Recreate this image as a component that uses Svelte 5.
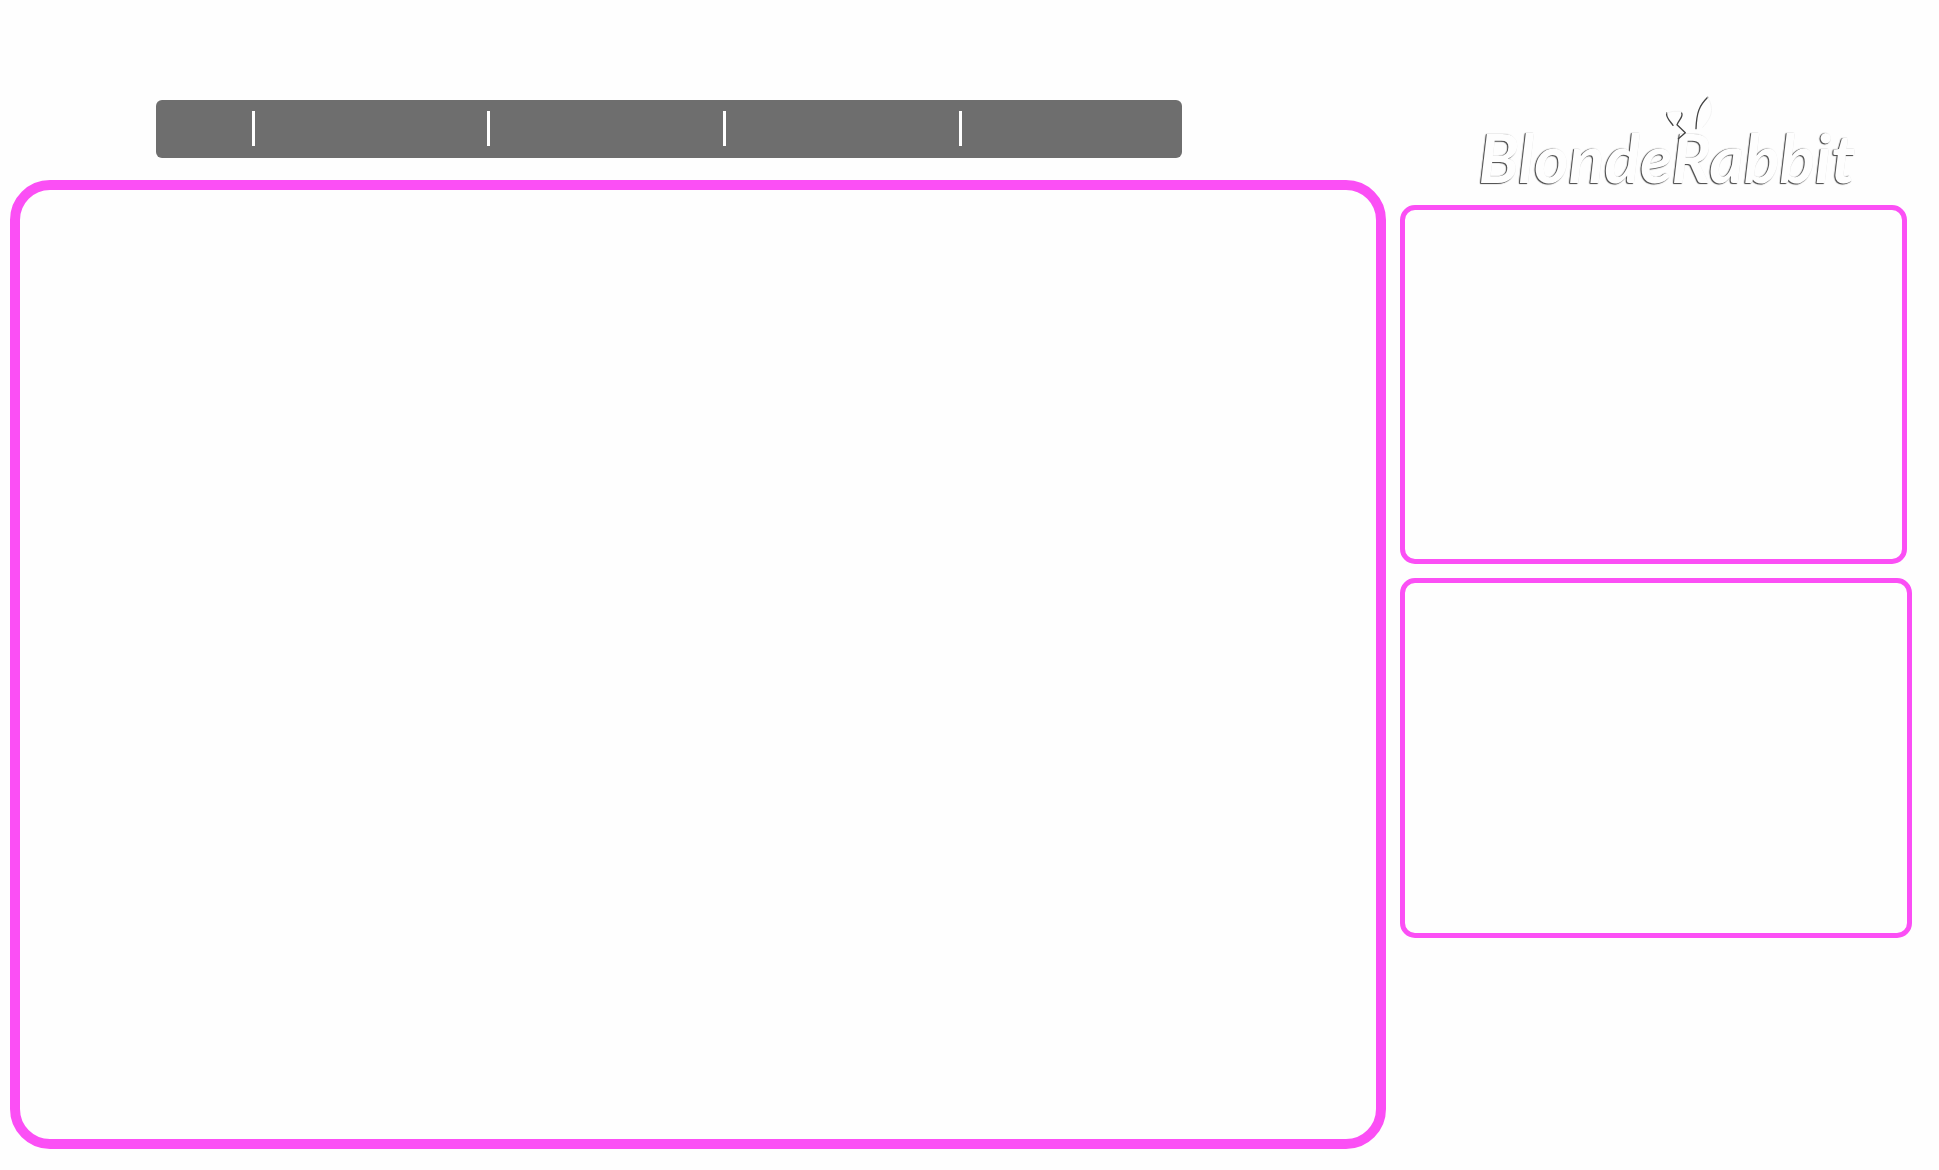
<script>
  const sections = [1, 2, 3, 4, 5];
</script>

<div class="page">
  <div class="primary">
    <nav aria-label="Main">
      {#each sections as n}
        <a href="#section-{n}" aria-label="Section {n}"></a>
      {/each}
    </nav>
    <main></main>
  </div>

  <aside>
    <header>
      <a class="logo" href="#home">
        <span>BlondeRabbit</span>
        <svg class="ears" viewBox="0 0 150 135" aria-hidden="true">
          <g class="edge">
            <path d="M8 51C5 65 19 76 27 88" />
            <path d="M53 51C59 61 45 72 39 86L64 110L43 128" />
            <path d="M131 4C106 29 98 48 96 98" />
          </g>
          <g class="glow">
            <path d="M8 51Q25 43 53 46" />
            <path d="M131 4C150 36 146 62 116 94" />
          </g>
        </svg>
      </a>
    </header>
    <section class="panel upper"></section>
    <section class="panel lower"></section>
  </aside>
</div>

<style>
  :global(body) {
    background: #fefefe;
  }

  .page,
  .page * {
    box-sizing: border-box;
  }

  .page {
    display: grid;
    grid-template-columns: 1376fr 512fr;
    gap: 14px;
    padding: 0 27px 21px 10px;
  }

  .primary {
    padding-top: 100px;
  }

  nav {
    display: grid;
    grid-template-columns: 96fr 235fr 236fr 236fr 223fr;
    height: 58px;
    margin: 0 204px 22px 146px;
    padding: 11px 0 12px;
    border-radius: 6px;
    background: #6e6e6e;
  }

  nav a + a {
    border-left: 3px solid #fff;
  }

  main {
    min-height: calc(100vh - 201px);
    border: 10px solid #fb4ff5;
    border-radius: 40px;
  }

  header {
    display: flex;
    justify-content: center;
    height: 205px;
    padding: 118px 0 0 22px;
  }

  .logo {
    position: relative;
    height: 80px;
    color: #fefefe;
    font: italic 700 66px/80px Lato, sans-serif;
    text-decoration: none;
    text-shadow: -1px 0 1px #555, -1px 1px 1px #444;
  }

  .ears {
    position: absolute;
    left: 185px;
    top: -22px;
    width: 50px;
    height: 45px;
    fill: none;
    stroke-linecap: round;
    stroke-linejoin: round;
  }

  .edge {
    stroke: #444;
    stroke-width: 4;
  }

  .glow {
    stroke: #eee;
    stroke-width: 2;
  }

  .panel {
    border: 5px solid #fb4ff5;
    border-radius: 15px;
  }

  .upper {
    height: 359px;
    margin: 0 5px 14px 0;
  }

  .lower {
    height: 360px;
  }
</style>
